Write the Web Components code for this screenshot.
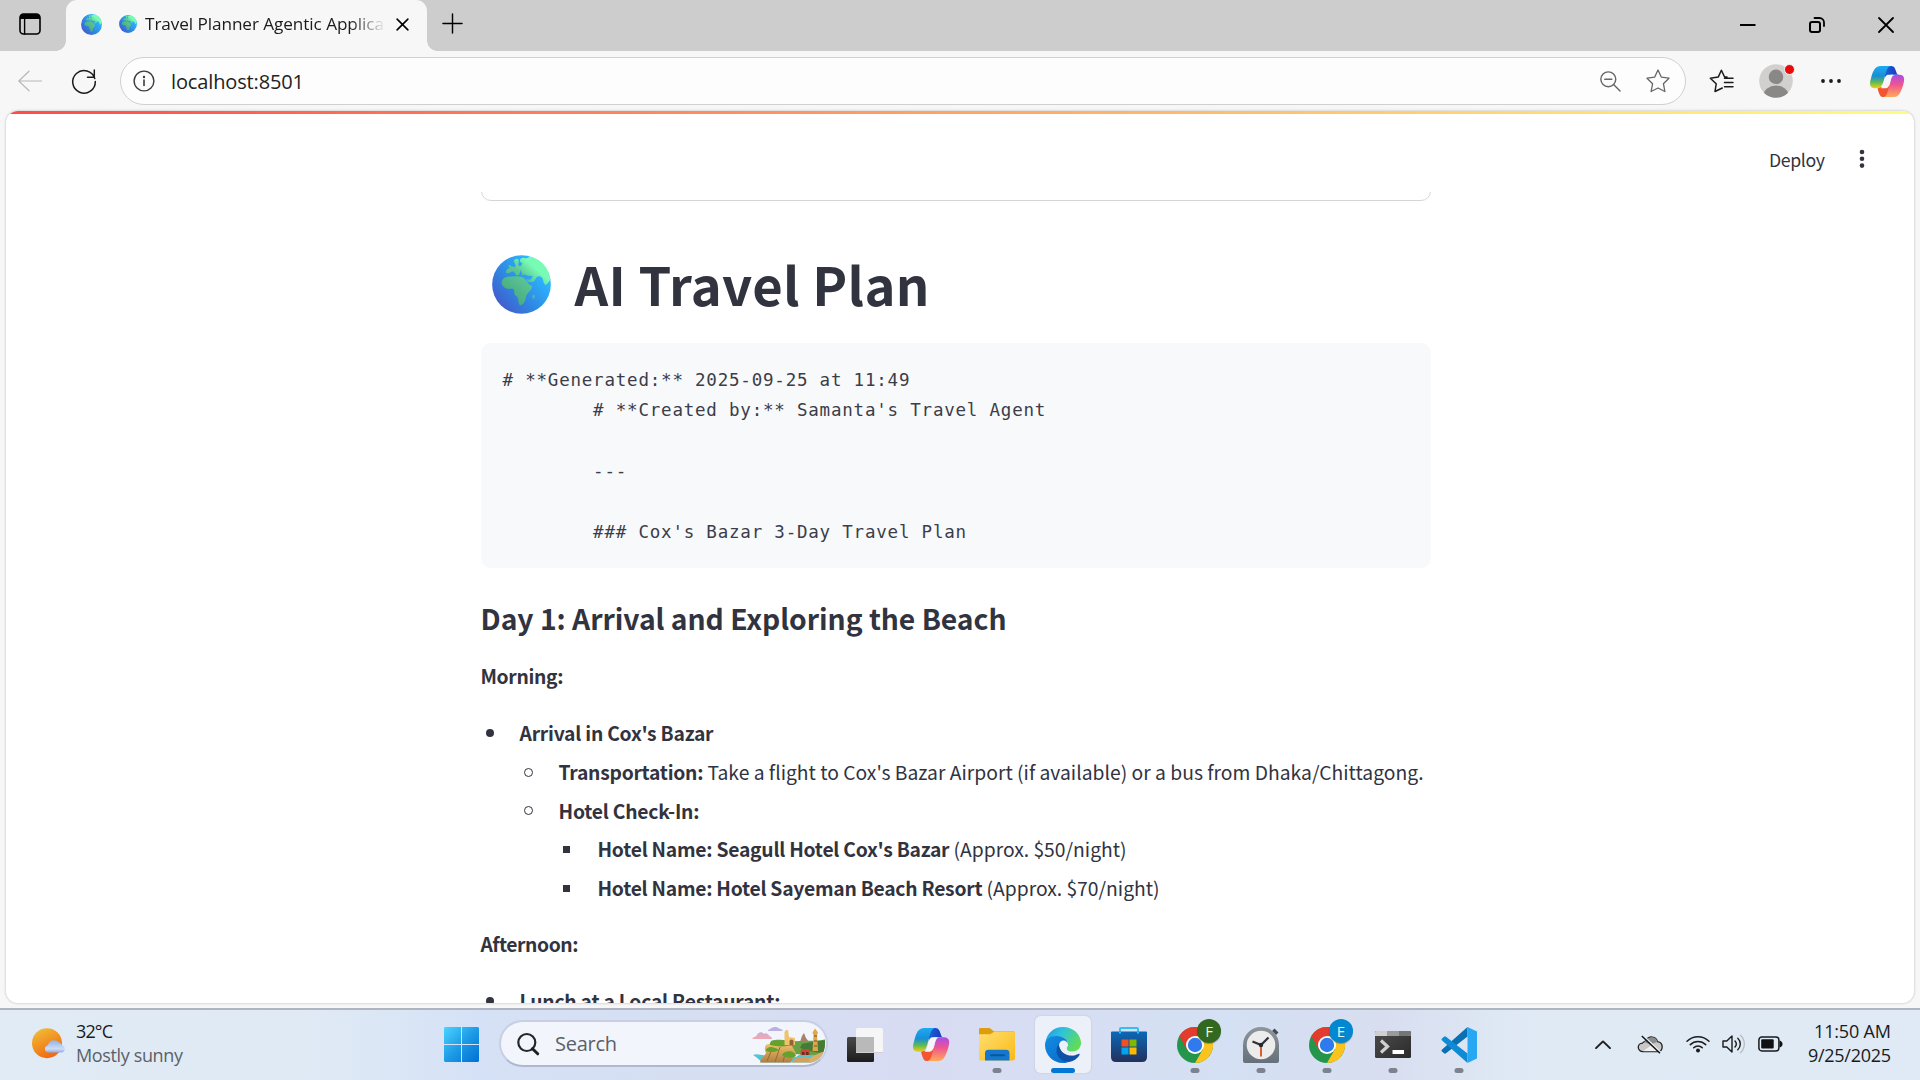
<!DOCTYPE html>
<html lang="en">
<head>
<meta charset="utf-8">
<title>Travel Planner Agentic Application</title>
<style>
  html, body { margin: 0; height: 100%; overflow: hidden; background: #f7f7f7; }
</style>
</head>
<body>
<desktop-screen></desktop-screen>
<script>
const SEGOE = '"Open Sans","Noto Sans",sans-serif';
const SOURCE = '"Noto Sans CJK SC","Noto Sans",sans-serif';

function define(name, html, init) {
  const t = document.createElement('template');
  t.innerHTML = html;
  customElements.define(name, class extends HTMLElement {
    connectedCallback() {
      if (this.shadowRoot) return;
      this.attachShadow({ mode: 'open' }).appendChild(t.content.cloneNode(true));
      if (init) init.call(this, this.shadowRoot);
    }
  });
}

let uid = 0;
const GLOBE = id => `<defs><linearGradient id="o${id}" x1=".1" y1=".9" x2=".8" y2=".3"><stop offset="0" stop-color="#4658cc"/><stop offset=".45" stop-color="#2f84e0"/><stop offset="1" stop-color="#2cb4ff"/></linearGradient><linearGradient id="l${id}" x1="110" y1="370" x2="215" y2="250" gradientUnits="userSpaceOnUse"><stop offset="0" stop-color="#43a47c"/><stop offset=".6" stop-color="#5cc795"/><stop offset=".85" stop-color="#78fbb4"/></linearGradient></defs>
<circle cx="155" cy="315" r="88.500" fill="url(#o${id})"/>
<g fill="url(#l${id})"><path d="M132 242C138 234 150 235 146 250C143 262 154 264 158 251C146 246 148 234 162 234C170 240 176 230 184 231C216 240 238 266 242 300C238 306 229 322 225 314C218 308 224 293 209 290C197 288 199 302 190 307C178 311 167 303 172 299L180 301C190 298 182 292 192 290C178 288 168 288 163 284L158 288L153 271L147 286L140 287L131 275C120 276 120 283 110 281C106 274 110 267 120 265C112 258 117 252 125 260L135 262C140 256 132 250 132 242Z"/>
<path d="M108 293C122 290 150 288 160 294C170 300 172 314 187 320C188 330 172 340 169 350C167 366 160 378 151 378C143 372 149 354 137 348C130 342 137 330 127 327C112 332 96 324 95 310C96 300 101 294 108 293Z"/><path d="M188 348l6-3 1 10-6 4z"/></g>`;

const COPILOT = id => `<defs><linearGradient id="a${id}" x1="0" y1="0" x2="0" y2="1"><stop offset="0" stop-color="#1faaf0"/><stop offset=".45" stop-color="#168fd6"/><stop offset=".72" stop-color="#5cb85a"/><stop offset="1" stop-color="#f0d00a"/></linearGradient><linearGradient id="b${id}" x1="0" y1="0" x2="0" y2="1"><stop offset="0" stop-color="#a84bea"/><stop offset=".45" stop-color="#f0568e"/><stop offset="1" stop-color="#ffab5a"/></linearGradient><linearGradient id="c${id}"><stop offset="0" stop-color="#1a62dd"/><stop offset="1" stop-color="#1637b8"/></linearGradient></defs>
<path d="M15 0H22C25 0 26 3 27 6C27.500 8 28 9 30 9H23C19 9 18 11 17 14L15 9Z" fill="url(#c${id})"/>
<path d="M8 22H15C17 22 18 20 19 17L22 25C20 29 19 32 15 32H13C10 32 9 27 8 24Z" fill="#f2552f"/>
<path d="M11 0H22C18 0 17 5 15 12C13 19 12 23 7 23H5C0 23-1 19 1 13C3 5 5 0 11 0Z" fill="url(#a${id})"/>
<path d="M25 9H30C36 9 36 14 34 20C31 29 29 32 24 32H14C18 31 18 26 20 20C22 13 22 9 27 9Z" fill="url(#b${id})"/>
<path d="M18.500 9H24C22 10 21.500 14 20.500 17.500C19.500 21 18.500 23 16 23H11C13.500 22 14 18 15 14.500C16 11 16.500 9 18.500 9Z" fill="#f5f5fb"/>`;

const CHROME = `<circle cx="18" cy="18" r="18" fill="#24964b"/><path d="M2.400 9A18 18 0 0 1 33.600 9H18L10.200 22.500Z" fill="#e33b2e"/><path d="M33.600 9A18 18 0 0 1 18 36L25.800 22.500L26 13L18 9Z" fill="#fcc31e"/><path d="M2.400 9L10.200 22.500L18 18Z" fill="#e33b2e"/><circle cx="18" cy="18" r="9" fill="#fff"/><circle cx="18" cy="18" r="7.200" fill="#2f7bee"/>`;

const S = (w, c = '#1b1b1b') => `fill="none" stroke="${c}" stroke-width="${w}" stroke-linecap="round" stroke-linejoin="round"`;

const ICONS = {
  globe: id => ['66 226 178 178', GLOBE(id)],
  copilot: id => ['0 0 35 32', COPILOT(id)],
  workspace: () => ['0 0 22 22', `<rect x="1" y="1" width="20" height="20" rx="3.500" ${S(1.600, '#000')}/><path d="M1 6V4.500A3.500 3.500 0 0 1 4.500 1H17.500A3.500 3.500 0 0 1 21 4.500V6Z" fill="#000"/><path d="M5.600 6V21" ${S(1.400, '#000')}/>`],
  x: () => ['0 0 14 14', `<path d="M1.200 1.200L12.800 12.800M12.800 1.200L1.200 12.800" ${S(1.700, '#000')}/>`],
  plus: () => ['0 0 22 22', `<path d="M11 1V21M1 11H21" ${S(1.500, '#000')}/>`],
  min: () => ['0 0 16 16', `<path d="M0 8H15.500" stroke="#000" stroke-width="2"/>`],
  restore: () => ['0 0 16 16', `<rect x="1" y="5" width="10" height="10" rx="2" ${S(2, '#000')}/><path d="M5.500 1H10.500A4.500 4.500 0 0 1 15 5.500V9" ${S(1.800, '#000')}/>`],
  close: () => ['0 0 16 16', `<path d="M1 1L15 15M15 1L1 15" ${S(1.800, '#000')}/>`],
  back: () => ['0 0 24 22', `<path d="M23.500 11H.8M11 1.200L.8 11L11 20.800" ${S(1.200, '#b8b8b8')}/>`],
  refresh: () => ['0 0 24 24', `<path d="M22.800 9.500A11.300 11.300 0 1 0 23.300 12.500M22.300 1V8.200H15.500" ${S(1.500)}/>`],
  info: () => ['0 0 22 22', `<circle cx="11" cy="11" r="9.900" ${S(1.400, '#3c3c3c')}/><path d="M11 10V15.500" ${S(1.600, '#3c3c3c')}/><circle cx="11" cy="7" r="1.200" fill="#3c3c3c"/>`],
  zoomout: () => ['0 0 22 22', `<circle cx="8.700" cy="8.700" r="7.800" ${S(1.500, '#666')}/><path d="M5 8.700H12.400M14.200 14.200L21 21" ${S(1.500, '#666')}/>`],
  star: () => ['0 0 24 24', `<path d="M12 1L15.300 8.100L23 9.200L17.400 14.700L18.900 22.500L12 19L5.100 22.500L6.600 14.700L1 9.200L8.700 8.100Z" ${S(1.300, '#666')}/>`],
  favs: () => ['0 0 25 24', `<path d="M13.300 19L6 22.500L7.200 14.800L1.300 9.200L9.200 8.100L12.400 1.200L15.600 8H18M15.500 9.200H24M15.500 13.500H24M15.500 17.800H24" ${S(1.500)}/>`],
  avatar: () => ['0 0 34 34', `<clipPath id="av"><circle cx="17" cy="17" r="16.800"/></clipPath><circle cx="17" cy="17" r="16.800" fill="#d2d0ce"/><g clip-path="url(#av)" fill="#8a8886"><circle cx="17" cy="12.800" r="7.300"/><ellipse cx="17" cy="31.500" rx="12.500" ry="10"/></g>`],
  more: () => ['0 0 22 6', `<g fill="#1b1b1b"><circle cx="3" cy="3" r="1.900"/><circle cx="11" cy="3" r="1.900"/><circle cx="19" cy="3" r="1.900"/></g>`],
  kebab: () => ['0 0 6 20', `<g fill="#31333f"><circle cx="3" cy="3" r="2.300"/><circle cx="3" cy="9.800" r="2.300"/><circle cx="3" cy="16.600" r="2.300"/></g>`],
  weather: () => ['0 0 33 31', `<defs><linearGradient id="su" x1=".2" y1="0" x2=".7" y2="1"><stop offset="0" stop-color="#f2bd35"/><stop offset="1" stop-color="#f0640f"/></linearGradient><linearGradient id="cl" x1="0" y1="0" x2="0" y2="1"><stop offset="0" stop-color="#8fb2ea"/><stop offset=".7" stop-color="#cfdcf6"/><stop offset="1" stop-color="#8badea"/></linearGradient></defs><circle cx="15" cy="15.200" r="15" fill="url(#su)"/><path d="M16 24.500A3.700 3.700 0 0 1 16 17.200C17 12.500 23 10 27 14.500C29 15 30 17 29.800 17.500C34 18 34 24.500 29 24.500Z" fill="url(#cl)"/>`],
  windows: () => ['0 0 35 35', `<defs><linearGradient id="wi" x1="0" y1="0" x2="1" y2="1"><stop offset="0" stop-color="#4bd4ff"/><stop offset=".5" stop-color="#1d9be6"/><stop offset="1" stop-color="#0070d2"/></linearGradient></defs><path d="M1 0H17V17H0V1ZM18 0H34L35 1V17H18ZM0 18H17V35H1L0 34ZM18 18H35V34L34 35H18Z" fill="url(#wi)"/>`],
  search: () => ['0 0 22 22', `<circle cx="9.800" cy="9.500" r="8.500" fill="none" stroke="#262626" stroke-width="2.200"/><path d="M15.500 15.700L20.700 20.800" stroke="#1f1f1f" stroke-width="3" stroke-linecap="round"/>`],
  castle: () => ['0 0 75 36', `<defs><clipPath id="ca"><path d="M0 0H73V16C73 27 67 35 58 35.500H0Z"/></clipPath><linearGradient id="rk" x1="0" y1="0" x2="0" y2="1"><stop offset="0" stop-color="#efc56f"/><stop offset="1" stop-color="#b07c40"/></linearGradient><linearGradient id="cd" x1="0" y1="0" x2="0" y2="1"><stop offset="0" stop-color="#a8b4ea"/><stop offset="1" stop-color="#f3a7b4"/></linearGradient></defs><g clip-path="url(#ca)">
   <path d="M0 11.500C1 10 4 10 5 8C6 5 10 4 12 7C14 5 17 8 18 9.500C20 10 21 12 19 12H2ZM16 3C18 3 19 0 23 0C26 0 27 2 31 3C31 4 29 4 28 4H16Z" fill="url(#cd)"/>
   <path d="M1 28C6 26 10 29 14 28L44 30C52 24 60 30 75 22V36H10C7 32 4 30 1 28Z" fill="#56c4cf"/>
   <path d="M19 14C28 11 40 15 48 14C55 13 60 15 75 12V26C64 30 52 27 40 27L18 20Z" fill="#6aa044"/>
   <path d="M50 17C60 15 66 14 75 13V25C66 27 58 24 48 21Z" fill="#477a37"/>
   <path d="M14 18C22 14 32 17 40 19L44 26L38 36H8C8 32 12 30 14 26C12 22 13 20 14 18Z" fill="url(#rk)"/>
   <path d="M20 22L15 34M28 20L23 35M33 27L31 35" stroke="#99692f" stroke-width="1"/>
   <path d="M18 15.500C26 12 36 15 42 17C36 20 26 20 18 18ZM30 28C34 22 43 24 44 29C40 32 33 31 30 28ZM14 23C16 18 23 20 27 23C22 26 18 25 14 24Z" fill="#64a22c"/>
   <path d="M32.500 18V5L34 3H36L37 10L43 11V18Z" fill="#efc26c"/><path d="M37.500 18V14.500A2 2 0 0 1 41.500 14.500V18Z" fill="#946338"/>
   <path d="M48 15L50 9L52 6L54 11L57 15Z" fill="#a48368"/>
   <path d="M60.500 24L61.500 8L60.500 5.500L63 1.500L66 5.500L65 8L66 24Z" fill="#e0a74a"/><path d="M62 9h3M62 14h3M62 19h3" stroke="#7c4f26" stroke-width="1.200"/>
   <path d="M48.500 24.500L50 22H57.500L58 28H48.500Z" fill="#c94b31"/><path d="M50 25h2.500v3h-2.500zM54 25h2.500v3h-2.500z" fill="#6a2c24"/>
   <path d="M42 33C48 28 56 29 61 34L60 36H40Z" fill="#d5a05e"/><path d="M57 32C63 27 70 26 75 23V36H58Z" fill="#dcae6c"/></g>`],
  taskview: () => ['0 0 36 34', `<defs><linearGradient id="tv" x1="0" y1="0" x2="0" y2="1"><stop offset="0" stop-color="#494949"/><stop offset="1" stop-color="#1c1c1c"/></linearGradient></defs><rect x="0" y="9" width="27" height="25" rx="1.500" fill="url(#tv)"/><rect x="9" y="0" width="27" height="25" rx="1.500" fill="#f6f6f6"/><path d="M9 9H27V25H9Z" fill="#b9b9b9"/><path d="M9 24.500H36" stroke="#d0d0d0"/>`],
  explorer: () => ['0 0 36 34', `<defs><linearGradient id="fo" x1="0" y1="0" x2="1" y2="1"><stop offset="0" stop-color="#ffdf70"/><stop offset="1" stop-color="#fab916"/></linearGradient></defs><path d="M0 7V1.500Q0 0 1.500 0H10Q11 0 12 1L15 3.500H34Q36 3.500 36 5V9H0Z" fill="#dd9d0c"/><path d="M0 6.500H11L15 4H35Q36 4 36 5V31.500Q36 33.500 34 33.500H2Q0 33.500 0 31.500Z" fill="url(#fo)"/><path d="M6 33.500V26Q6 22.500 9.500 22.500H27Q30.500 22.500 30.500 26V33.500Z" fill="#1378ce"/><path d="M12 28H25" stroke="#0b559c" stroke-width="2" stroke-linecap="round"/>`],
  edge: () => ['0 0 36 36', `<defs><linearGradient id="e1" x1="0" y1="0" x2="1" y2=".5"><stop offset="0" stop-color="#2590df"/><stop offset=".45" stop-color="#2fc2dc"/><stop offset="1" stop-color="#5fdc5a"/></linearGradient><linearGradient id="e2" x1="0" y1="0" x2=".7" y2="1"><stop offset="0" stop-color="#128ce0"/><stop offset="1" stop-color="#0a6fce"/></linearGradient></defs>
   <path d="M.5 15C2 6 9 0 18 0C29 0 36 8 36 16C36 21 32 24.500 27 24.500C23 24.500 21.500 23 21.500 21.500C21.500 20.500 23 19.500 23 17.500C23 13 18 9.500 11.500 9.500C6 9.500 2 12 .5 15Z" fill="url(#e1)"/>
   <path d="M0 18C0 12 5 8.500 12 9C19 9.500 23 13 22.500 17C21 13.500 13 14 13 22C13 29 18 34 24 35C21 36 19 36 18 36C8 36 0 28 0 18Z" fill="url(#e2)"/>
   <path d="M14 17C9 23 12 31 19 34C26 37 32 32 34.500 28C35 27 34 26.500 33.500 27C24 31 16 25 14 17Z" fill="#0d52a4"/>
   <circle cx="18.500" cy="17.800" r="4.200" fill="#ecf0f9"/><path d="M14.300 18C14.500 25 22 30.500 31 28C27 26.500 22.500 25 21.500 21Z" fill="#ecf0f9"/>`],
  store: () => ['0 0 36 35', `<defs><linearGradient id="st" x1="0" y1="0" x2="0" y2="1"><stop offset="0" stop-color="#0b68b8"/><stop offset="1" stop-color="#23315c"/></linearGradient></defs><path d="M9 7V2Q9 1 10 1H26Q27 1 27 2V7" fill="none" stroke="#37bdf3" stroke-width="2"/><path d="M0 5.500Q0 4.500 1 4.500H35Q36 4.500 36 5.500V30Q36 35 31 35H5Q0 35 0 30Z" fill="url(#st)"/><path d="M10.500 12.500H17.500V19.500H10.500Z" fill="#f25022"/><path d="M18.500 12.500H25.500V19.500H18.500Z" fill="#7fba00"/><path d="M10.500 20.500H17.500V27.500H10.500Z" fill="#00a4ef"/><path d="M18.500 20.500H25.500V27.500H18.500Z" fill="#ffb900"/><path d="M8 4.500H10V6.500H8ZM26 4.500H28V6.500H26Z" fill="#37bdf3"/>`],
  chrome: () => ['0 0 36 36', CHROME],
  clock: () => ['0 0 36 36', `<defs><linearGradient id="ck" x1="0" y1="0" x2="0" y2="1"><stop offset="0" stop-color="#8e969c"/><stop offset="1" stop-color="#65707a"/></linearGradient></defs><path d="M29 4L31.500 1.500L35.500 5.500L33 8Z" fill="#444b53"/><path d="M0 18A18 18 0 0 1 36 18V34Q36 36 34 36H2Q0 36 0 34Z" fill="url(#ck)"/><circle cx="18" cy="18" r="14.300" fill="#ececec"/><path d="M18 18V29.500" stroke="#d83b01" stroke-width="1.600"/><path d="M9.500 14.500L18 18L25.500 10.500" fill="none" stroke="#303439" stroke-width="2.300" stroke-linejoin="round"/><circle cx="18" cy="18" r="2.200" fill="#25282c"/>`],
  terminal: () => ['0 0 36 27', `<defs><linearGradient id="te" x1="0" y1="0" x2="1" y2="1"><stop offset="0" stop-color="#4c4c4c"/><stop offset="1" stop-color="#2b2b2b"/></linearGradient></defs><rect width="36" height="27" rx="1.500" fill="url(#te)"/><path d="M0 5V1.500Q0 0 1.500 0H12V5Z" fill="#cfcfcf"/><path d="M12 0H24V5H12Z" fill="#9a9a9a"/><path d="M24 0H34.500Q36 0 36 1.500V5H24Z" fill="#767676"/><path d="M6 9.500L12.500 15.500L6 21.500" fill="none" stroke="#d0d0d0" stroke-width="3.200"/><path d="M17.500 19H29V23H17.500Z" fill="#fff"/>`],
  vscode: () => ['0 0 36 36', `<path d="M1 24.500L3 26.300Q4 27 5 26.300L26.500 9.500V0L.8 22.700Q0 23.700 1 24.500Z" fill="#0a6fb4"/><path d="M1 11.500L3 9.700Q4 9 5 9.700L26.500 26.500V36L.8 13.300Q0 12.300 1 11.500Z" fill="#0f8bd6"/><path d="M26.500 0L36 4.500V31.500L26.500 36Z" fill="#28a7f2"/>`],
  chevron: () => ['0 0 16 10', `<path d="M1 9L8 1.500L15 9" ${S(2, '#222')}/>`],
  cloudoff: () => ['0 0 25 20', `<path d="M5 17.500A4.500 4.500 0 0 1 4.500 8.500C6 7 7 7 8 5.500C11 .5 18 1 19.500 7C26 8 25.500 17.500 19.500 17.500Z" fill="#c8c8c8" stroke="#222" stroke-width="1.300"/><path d="M8 5.500C11 1 18 1 19.500 7L13 10L6 7.500Z" fill="#8c8c8c"/><path d="M5 17L13 11L22 17Z" fill="#f0f0f0"/><path d="M5 .3L23 18.500" stroke="#e4ecf5" stroke-width="1.500"/><path d="M3.800 1L22 19.200" stroke="#111" stroke-width="1.400"/>`],
  wifi: () => ['0 0 24 18', `<path d="M1 6.200A15.800 15.800 0 0 1 23 6.200M4.300 9.600A11 11 0 0 1 19.700 9.600M7.700 12.800A6.200 6.200 0 0 1 16.300 12.800" ${S(1.500)}/><circle cx="12" cy="15.600" r="2" fill="#1b1b1b"/>`],
  sound: () => ['0 0 25 20', `<path d="M1 7H4.800L10 2V18L4.800 13H1Z" ${S(1.400)}/><path d="M13 7A4.500 4.500 0 0 1 13 13M15.800 4.200A8 8 0 0 1 15.800 15.800" ${S(1.400)}/><path d="M18.500 1.200A12 12 0 0 1 18.500 18.800" ${S(1.300, '#b5bcc4')}/>`],
  battery: () => ['0 0 25 16', `<rect x=".9" y=".9" width="20" height="14" rx="3" ${S(1.500)}/><rect x="3.200" y="3.300" width="12.500" height="9.200" rx="1" fill="#111"/><path d="M21.500 4.500Q24.500 5.500 24.500 8T21.500 11.500Z" fill="#111"/>`],
};

define('ui-icon', `<style>:host{display:block;flex:none}svg{display:block;width:100%;height:100%;overflow:visible}</style>`, function (root) {
  const [vb, body] = ICONS[this.getAttribute('name')](++uid);
  const w = this.getAttribute('w'), h = this.getAttribute('h') || w;
  this.style.width = w + 'px'; this.style.height = h + 'px';
  root.innerHTML += `<svg viewBox="${vb}" preserveAspectRatio="none" aria-hidden="true">${body}</svg>`;
});

/* One line of text, tracked so that it fills the width given in "w". */
customElements.define('fit-text', class extends HTMLElement {
  connectedCallback() {
    if (this.shadowRoot) return;
    const text = this.getAttribute('text');
    const root = this.attachShadow({ mode: 'open' });
    root.innerHTML = `<style>:host{display:inline-block;flex:none;white-space:pre}span{display:inline-block}</style><span></span>`;
    const span = root.querySelector('span');
    span.textContent = text;
    const w = +this.getAttribute('w');
    const natural = span.getBoundingClientRect().width;
    span.style.letterSpacing = ((w - natural) / (text.length - 1)).toFixed(3) + 'px';
    this.style.width = w + 'px';
  }
});

define('tab-strip', `<style>
  :host{display:flex;align-items:flex-start;height:51px;background:#cdcdcd;box-sizing:border-box;padding-left:19px;font:17.2px/24px ${SEGOE};color:#1b1b1b}
  .ws{margin-top:13px}
  .tab{display:flex;align-items:center;width:361px;height:51px;margin-left:25px;padding-left:15px;box-sizing:border-box;background:#f7f7f7;border-radius:11px 11px 0 0}
  .foot{width:10px;height:10px;align-self:flex-end;margin:0 -10px 0 0}
  .foot.l{margin:0 -25px 0 15px;background:radial-gradient(circle at 0 0,transparent 9.500px,#f7f7f7 10px)}
  .foot.r{margin:0;background:radial-gradient(circle at 100% 0,transparent 9.500px,#f7f7f7 10px)}
  .title{width:239px;overflow:hidden;margin-left:8px;padding-bottom:4px;-webkit-mask-image:linear-gradient(90deg,#000 205px,transparent 241px);mask-image:linear-gradient(90deg,#000 205px,transparent 241px)}
  .tab .x{margin:0 0 2px 12px}
  .fav{margin-bottom:3px}.em{margin:0 0 3px 17px}
  .plus{margin:13px 0 0 5px}
  .win{display:flex;margin:17px 26px 0 auto;gap:53px}
</style>
<ui-icon class="ws" name="workspace" w="22"></ui-icon><span class="foot l"></span>
<div class="tab"><ui-icon class="fav" name="globe" w="21"></ui-icon><ui-icon class="em" name="globe" w="18"></ui-icon><div class="title"><fit-text text="Travel Planner Agentic Applica" w="239"></fit-text></div><ui-icon class="x" name="x" w="13"></ui-icon></div>
<span class="foot r"></span><ui-icon class="plus" name="plus" w="21"></ui-icon>
<div class="win"><ui-icon name="min" w="16"></ui-icon><ui-icon name="restore" w="16"></ui-icon><ui-icon name="close" w="16"></ui-icon></div>`);

define('address-bar', `<style>
  :host{display:flex;align-items:center;height:60px;padding:0 16px 0 18px;box-sizing:border-box;background:#f7f7f7}
  .re{margin-left:30px}
  .pill{display:flex;align-items:center;width:1566px;height:48px;margin-left:24px;box-sizing:border-box;border:1.500px solid #d0d0d0;border-radius:24px;background:#fdfdfd;padding:0 15px 0 12px;font:20px/28px ${SEGOE};color:#222}
  .pill fit-text{margin-left:16px;padding-top:1px}
  .z{margin:0 25px 0 auto}
  .favs{margin-left:23px}
  .me{position:relative;margin:0 27px 0 25px}
  .me i{position:absolute;right:-2px;top:0;width:9px;height:9px;border-radius:50%;background:#e60c0c;border:1px solid #f7f7f7}
  .co{margin:0 0 0 auto}
</style>
<ui-icon name="back" w="24" h="22"></ui-icon><ui-icon class="re" name="refresh" w="24"></ui-icon>
<div class="pill"><ui-icon name="info" w="22"></ui-icon><fit-text text="localhost:8501" w="133"></fit-text><ui-icon class="z" name="zoomout" w="21"></ui-icon><ui-icon name="star" w="24"></ui-icon></div>
<ui-icon class="favs" name="favs" w="25" h="24"></ui-icon><div class="me"><ui-icon name="avatar" w="34"></ui-icon><i></i></div><ui-icon name="more" w="22" h="6"></ui-icon><ui-icon class="co" name="copilot" w="34" h="31"></ui-icon>`);

define('list-row', `<style>
  :host{display:flex;align-items:center;height:38.750px;line-height:38.750px;white-space:pre}
  i{flex:none;box-sizing:border-box;width:8px;height:8px;margin:0 26px 0 5px;border-radius:50%;background:#31333f}
  :host([level="2"]){padding-left:39px}:host([level="3"]){padding-left:78px}
  :host([level="2"]) i{background:none;border:1px solid #31333f;width:9px;height:9px;margin:0 26px 0 4px}
  :host([level="3"]) i{border-radius:0;width:7.500px;height:7.500px;margin:0 27.500px 0 4px}
</style><i></i><slot></slot>`);

define('code-block', `<style>
  :host{display:block;height:224.500px;box-sizing:border-box;padding:22px;background:#f8f9fb;border-radius:10px}
  pre{margin:0;font:17.500px/30.450px "DejaVu Sans Mono",monospace;letter-spacing:.79px;color:#3b3d49}
</style><pre><slot></slot></pre>`);

define('travel-plan', `<style>
  :host{display:block;width:950px;margin:0 auto;font-family:${SOURCE};color:#31333f;font-size:19.300px}
  .card{height:9px;overflow:hidden;display:flex;align-items:flex-end}
  .card div{flex:1;height:40px;flex-shrink:0;box-sizing:border-box;border:1px solid #d4d5d9;border-radius:10px}
  h1{display:flex;align-items:center;margin:50px 0 28px;padding-left:11px;height:64px;font-size:52.500px;line-height:64px;font-weight:700}
  h1 ui-icon{margin:3px 24px 0 0}
  h3{margin:30.500px 0 19px;font-size:28.300px;line-height:40px;height:40px;font-weight:600}
  p{margin:0;line-height:39px;height:39px;font-weight:600}
  .list{margin:18px 0 17px}
  b{font-weight:600}.g{margin-left:4px}
</style>
<div class="card"><div></div></div>
<h1><ui-icon name="globe" w="59"></ui-icon><fit-text text="AI Travel Plan" w="355"></fit-text></h1>
<code-block># **Generated:** 2025-09-25 at 11:49
        # **Created by:** Samanta's Travel Agent

        ---

        ### Cox's Bazar 3-Day Travel Plan</code-block>
<h3><fit-text text="Day 1: Arrival and Exploring the Beach" w="526"></fit-text></h3>
<p><fit-text text="Morning:" w="83"></fit-text></p>
<div class="list">
<list-row><b><fit-text text="Arrival in Cox's Bazar" w="194"></fit-text></b></list-row>
<list-row level="2"><b><fit-text text="Transportation:" w="145"></fit-text></b><fit-text class="g" text="Take a flight to Cox's Bazar Airport (if available) or a bus from Dhaka/Chittagong." w="716"></fit-text></list-row>
<list-row level="2"><b><fit-text text="Hotel Check-In:" w="141"></fit-text></b></list-row>
<list-row level="3"><b><fit-text text="Hotel Name: Seagull Hotel Cox's Bazar" w="352"></fit-text></b><fit-text class="g" text="(Approx. $50/night)" w="173"></fit-text></list-row>
<list-row level="3"><b><fit-text text="Hotel Name: Hotel Sayeman Beach Resort" w="385"></fit-text></b><fit-text class="g" text="(Approx. $70/night)" w="173"></fit-text></list-row>
</div>
<p><fit-text text="Afternoon:" w="98"></fit-text></p>
<div class="list"><list-row><b><fit-text text="Lunch at a Local Restaurant:" w="261"></fit-text></b></list-row></div>`);

define('app-page', `<style>
  :host{display:flex;flex-direction:column;height:892px;margin:0 6px 5px;box-sizing:border-box;background:#fff;border-radius:12px;overflow:hidden;box-shadow:0 0 2px 1px #d9d9d9}
  .bar{flex:none;height:3px;background:linear-gradient(90deg,#ff4b4b,#fffd80)}
  header{flex:none;display:flex;justify-content:flex-end;align-items:center;height:78px;box-sizing:border-box;padding:12px 49px 0 0;font:17.700px/30px ${SOURCE};color:#31333f}
  header ui-icon{margin:0 0 0 34px}
  header fit-text{margin-top:-1px}
  main{flex:1;min-height:0;overflow:hidden;padding-right:9px}
</style><div class="bar"></div><header><fit-text text="Deploy" w="56"></fit-text><ui-icon name="kebab" w="6" h="20"></ui-icon></header>
<main><slot></slot></main>`);

define('task-button', `<style>
  :host{display:flex;align-items:center;justify-content:center;width:66px;height:57px;flex:none}
  div{position:relative;display:flex;align-items:center;justify-content:center;width:56px;height:57px;border-radius:6px}
  :host([active]) div{background:#ecf0f9;box-shadow:0 0 1px 1px #cfd5e3}
  i{display:none;position:absolute;bottom:0;left:50%;transform:translateX(-50%);width:9px;height:5px;border-radius:3px;background:#7d828e}
  :host([running]) i,:host([active]) i{display:block}
  :host([active]) i{width:24px;background:#0078d4}
  em{position:absolute;left:30px;top:3px;width:24px;height:24px;border-radius:50%;font:15px/24px ${SEGOE};color:#e8f3e8;text-align:center;box-shadow:0 1px 1px #0004}
</style><div><slot></slot><i></i></div>`, function (root) {
  const b = this.getAttribute('badge');
  if (b) { const e = document.createElement('em'); e.textContent = b; e.style.background = this.getAttribute('color'); root.querySelector('div').append(e); }
});

define('task-bar', `<style>
  :host{display:flex;height:72px;box-sizing:border-box;border-top:2px solid #aeb5c1;padding:6px 29px 0 32px;background:linear-gradient(90deg,#e0ebf5 0,#e0eaf5 16%,#d5e1f6 25%,#d6dff2 36%,#d8dcf2 48%,#d4e0f3 64%,#d8def0 72%,#e0eaf5 80%,#dfeaf6 100%);font:18px/24px ${SEGOE};color:#1b1b1b}
  .w{margin-top:12px}
  .wt,.time{display:flex;flex-direction:column;padding-top:3px}
  .wt{margin-left:11px}.wt :last-child{color:#5b6169}
  .start{margin:11px 0 0 261px}
  .pill{display:flex;align-items:center;width:329px;height:47px;margin:4px 0 0 20px;box-sizing:border-box;border:2px solid #c6cfe3;border-bottom-color:#aeb8cf;border-radius:24px;background:#f2f5fc;padding-left:16px;font-size:20px;color:#5c5f66}
  .pill fit-text{margin-left:16px;padding-top:1px}.pill .c{margin:2px -1px 0 auto}
  .apps{display:flex;margin-left:4px}
  .tray{display:flex;align-items:center;height:56px;margin:0 0 0 auto}
  .time{align-items:flex-end}
</style>
<ui-icon class="w" name="weather" w="33" h="31"></ui-icon>
<div class="wt"><fit-text text="32°C" w="37"></fit-text><fit-text text="Mostly sunny" w="107"></fit-text></div>
<ui-icon class="start" name="windows" w="35"></ui-icon>
<div class="pill"><ui-icon name="search" w="22"></ui-icon><fit-text text="Search" w="62"></fit-text><ui-icon class="c" name="castle" w="75" h="36"></ui-icon></div>
<div class="apps">
<task-button><ui-icon name="taskview" w="36" h="34"></ui-icon></task-button>
<task-button><ui-icon name="copilot" w="36" h="33"></ui-icon></task-button>
<task-button running><ui-icon name="explorer" w="36" h="33"></ui-icon></task-button>
<task-button active><ui-icon name="edge" w="36"></ui-icon></task-button>
<task-button><ui-icon name="store" w="36" h="35"></ui-icon></task-button>
<task-button running badge="F" color="#33691e"><ui-icon name="chrome" w="36"></ui-icon></task-button>
<task-button running><ui-icon name="clock" w="36"></ui-icon></task-button>
<task-button running badge="E" color="#0288d1"><ui-icon name="chrome" w="36"></ui-icon></task-button>
<task-button running><ui-icon name="terminal" w="36" h="27"></ui-icon></task-button>
<task-button running><ui-icon name="vscode" w="36"></ui-icon></task-button>
</div>
<div class="tray"><ui-icon name="chevron" w="16" h="9"></ui-icon><ui-icon name="cloudoff" w="25" h="19" style="margin-left:27px"></ui-icon><ui-icon name="wifi" w="24" h="18" style="margin-left:23px"></ui-icon><ui-icon name="sound" w="25" h="20" style="margin-left:12px"></ui-icon><ui-icon name="battery" w="25" h="16" style="margin-left:11px"></ui-icon></div>
<div class="time" style="margin-left:25px"><fit-text text="11:50 AM" w="77"></fit-text><fit-text text="9/25/2025" w="83"></fit-text></div>`);

define('desktop-screen', `<style>
  :host{display:flex;flex-direction:column;width:1920px;height:1080px;overflow:hidden;background:#f7f7f7}
  :host>*{flex:none}
</style><tab-strip></tab-strip><address-bar></address-bar><app-page><travel-plan></travel-plan></app-page><task-bar></task-bar>`);
</script>
</body>
</html>
